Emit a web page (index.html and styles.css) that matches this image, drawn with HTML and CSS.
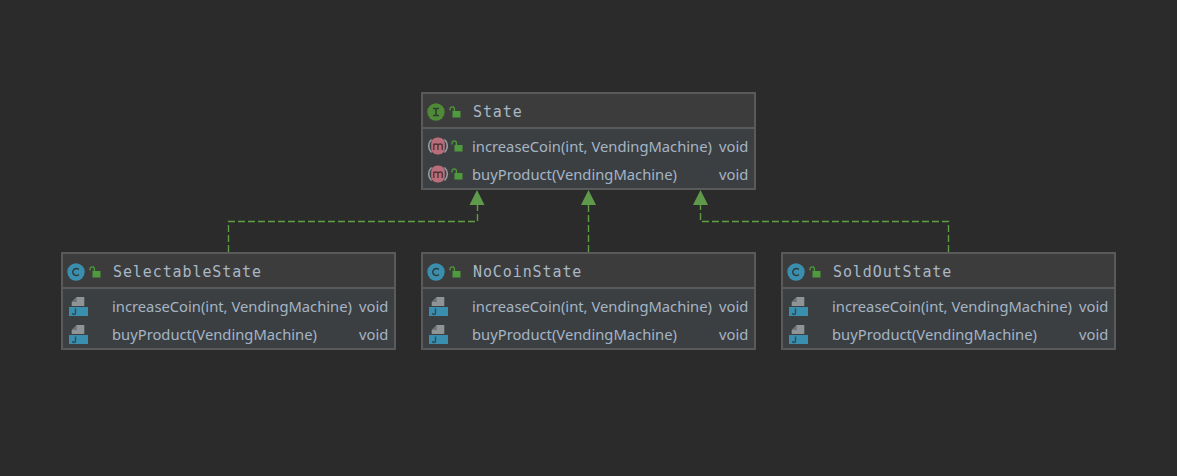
FILE: index.html
```html
<!DOCTYPE html>
<html lang="en">
<head>
<meta charset="utf-8">
<title>State diagram</title>
<link rel="stylesheet" href="styles.css">
</head>
<body>
<svg class="defs" width="0" height="0" aria-hidden="true">
  <symbol id="i-interface" viewBox="0 0 18 18"><circle class="fill-green" cx="9" cy="9" r="8.700"/><path class="glyph-dark" d="M6 5.500h6M6 12.500h6M9 5.500v7"/></symbol>
  <symbol id="i-class" viewBox="0 0 18 18"><circle class="fill-blue" cx="9" cy="9" r="8.700"/><path class="glyph-dark" d="M11.800 6.500a3.500 3.500 0 1 0 0 5"/></symbol>
  <symbol id="i-lock" viewBox="0 0 12 12"><rect class="lock-body" x="3.500" y="5" width="8" height="6.500"/><path class="lock-arc" d="M1 4.500V3a2.200 2.200 0 0 1 4.400 0v2"/></symbol>
  <symbol id="i-method" viewBox="0 0 20 18"><path class="ring" d="M3.500 2.500a9 9 0 0 0 0 13M16.500 2.500a9 9 0 0 1 0 13"/><rect class="fill-pink" x="3.200" y="0.500" width="13.600" height="17" rx="6"/><path class="glyph-m" d="M5.800 13V6.500M5.800 8.500c0-2 4.200-2 4.200 0V13M10 8.500c0-2 4.200-2 4.200 0V13"/></symbol>
  <symbol id="i-file" viewBox="0 0 20 19"><path class="file-gray" d="M3.700 9V5L8.700 0H16.300V9Z"/><path class="file-fold" d="M3.700 5H8.700V0Z"/><rect class="fill-blue" x="1" y="10" width="19" height="9"/><path class="glyph-j" d="M7.500 11.500v4.500a1.500 1.500 0 0 1-3 0"/></symbol>
</svg>
<main class="canvas">
  <svg class="edges" width="1177" height="476" viewBox="0 0 1177 476" aria-hidden="true">
    <g class="edge">
      <path d="M228.500 252V221.500H477.500V203"/>
      <path d="M588.500 252V203"/>
      <path d="M948.500 252V221.500H700.500V203"/>
    </g>
    <g class="arrow">
      <path d="M477 190L484.500 205H469.500Z"/>
      <path d="M588.500 190L596 205H581Z"/>
      <path d="M700.500 190L708 205H693Z"/>
    </g>
  </svg>

  <section class="node node-state">
    <header class="node-head">
      <svg class="ic-kind"><use href="#i-interface"/></svg>
      <svg class="ic-lock"><use href="#i-lock"/></svg>
      <span class="node-title">State</span>
    </header>
    <div class="node-body">
      <div class="row">
        <svg class="ic-method"><use href="#i-method"/></svg>
        <svg class="ic-lock ic-lock-row"><use href="#i-lock"/></svg>
        <span class="sig">increaseCoin(int, VendingMachine)</span><span class="ret">void</span>
      </div>
      <div class="row">
        <svg class="ic-method"><use href="#i-method"/></svg>
        <svg class="ic-lock ic-lock-row"><use href="#i-lock"/></svg>
        <span class="sig">buyProduct(VendingMachine)</span><span class="ret">void</span>
      </div>
    </div>
  </section>

  <section class="node node-selectable">
    <header class="node-head">
      <svg class="ic-kind"><use href="#i-class"/></svg>
      <svg class="ic-lock"><use href="#i-lock"/></svg>
      <span class="node-title">SelectableState</span>
    </header>
    <div class="node-body">
      <div class="row">
        <svg class="ic-file"><use href="#i-file"/></svg>
        <span class="sig">increaseCoin(int, VendingMachine)</span><span class="ret">void</span>
      </div>
      <div class="row">
        <svg class="ic-file"><use href="#i-file"/></svg>
        <span class="sig">buyProduct(VendingMachine)</span><span class="ret">void</span>
      </div>
    </div>
  </section>

  <section class="node node-nocoin">
    <header class="node-head">
      <svg class="ic-kind"><use href="#i-class"/></svg>
      <svg class="ic-lock"><use href="#i-lock"/></svg>
      <span class="node-title">NoCoinState</span>
    </header>
    <div class="node-body">
      <div class="row">
        <svg class="ic-file"><use href="#i-file"/></svg>
        <span class="sig">increaseCoin(int, VendingMachine)</span><span class="ret">void</span>
      </div>
      <div class="row">
        <svg class="ic-file"><use href="#i-file"/></svg>
        <span class="sig">buyProduct(VendingMachine)</span><span class="ret">void</span>
      </div>
    </div>
  </section>

  <section class="node node-soldout">
    <header class="node-head">
      <svg class="ic-kind"><use href="#i-class"/></svg>
      <svg class="ic-lock"><use href="#i-lock"/></svg>
      <span class="node-title">SoldOutState</span>
    </header>
    <div class="node-body">
      <div class="row">
        <svg class="ic-file"><use href="#i-file"/></svg>
        <span class="sig">increaseCoin(int, VendingMachine)</span><span class="ret">void</span>
      </div>
      <div class="row">
        <svg class="ic-file"><use href="#i-file"/></svg>
        <span class="sig">buyProduct(VendingMachine)</span><span class="ret">void</span>
      </div>
    </div>
  </section>
</main>
</body>
</html>
```
FILE: styles.css
```css
* { box-sizing: border-box; }
html, body { margin: 0; height: 100%; background: #2b2b2b; overflow: hidden; }
.defs { position: absolute; }
.canvas { position: relative; width: 1177px; height: 476px; background: #2b2b2b; }
.edges { position: absolute; left: 0; top: 0; }
.edge path { fill: none; stroke: #5f9e45; stroke-width: 1.400; stroke-dasharray: 7 3; }
.arrow path { fill: #5f9a4b; }

.node { position: absolute; width: 335px; height: 98px; border: 2px solid #5a5a5a; display: flex; flex-direction: column; background: #3b3f42; }
.node-state { left: 421px; top: 92px; }
.node-selectable { left: 61px; top: 252px; }
.node-nocoin { left: 421px; top: 252px; }
.node-soldout { left: 781px; top: 252px; }

.node-head { height: 35px; flex: none; display: flex; align-items: center; padding: 3px 0 0 4px; background: #3c3c3c; border-bottom: 2px solid #5a5a5a; }
.ic-kind { width: 18px; height: 18px; flex: none; }
.ic-lock { width: 12px; height: 12px; flex: none; margin-left: 4px; }
.node-title { margin: 1px 0 0 12px; font: 15px/1 "DejaVu Sans Mono", monospace; letter-spacing: 0.9px; color: #a9b7c6; }

.node-body { flex: 1; display: flex; flex-direction: column; padding-top: 3px; color: #a6b5c5; }
.row { height: 28px; display: flex; align-items: center; padding-left: 5px; position: relative; font: 14.750px/1 "Noto Sans", sans-serif; }
.ic-method { width: 20px; height: 18px; flex: none; margin-bottom: 1px; }
.ic-lock-row { margin-left: 3px; margin-bottom: 1px; }
.ic-file { width: 20px; height: 19px; flex: none; }
.sig { position: absolute; left: 49px; white-space: nowrap; }
.ret { position: absolute; left: 296px; white-space: nowrap; }

.fill-green { fill: #4f8a36; }
.fill-blue { fill: #3a8fae; }
.fill-pink { fill: #b96d7b; }
.glyph-dark { fill: none; stroke: #333b38; stroke-width: 1.600; }
.glyph-m { fill: none; stroke: #4a3236; stroke-width: 1.300; }
.ring { fill: none; stroke: #9a9ea1; stroke-width: 1.500; }
.lock-body { fill: #4f9a3c; }
.lock-arc { fill: none; stroke: #4f9a3c; stroke-width: 1.300; }
.file-gray { fill: #8f9497; }
.file-fold { fill: #6d7174; }
.glyph-j { fill: none; stroke: #2f4a58; stroke-width: 1.400; }
```
